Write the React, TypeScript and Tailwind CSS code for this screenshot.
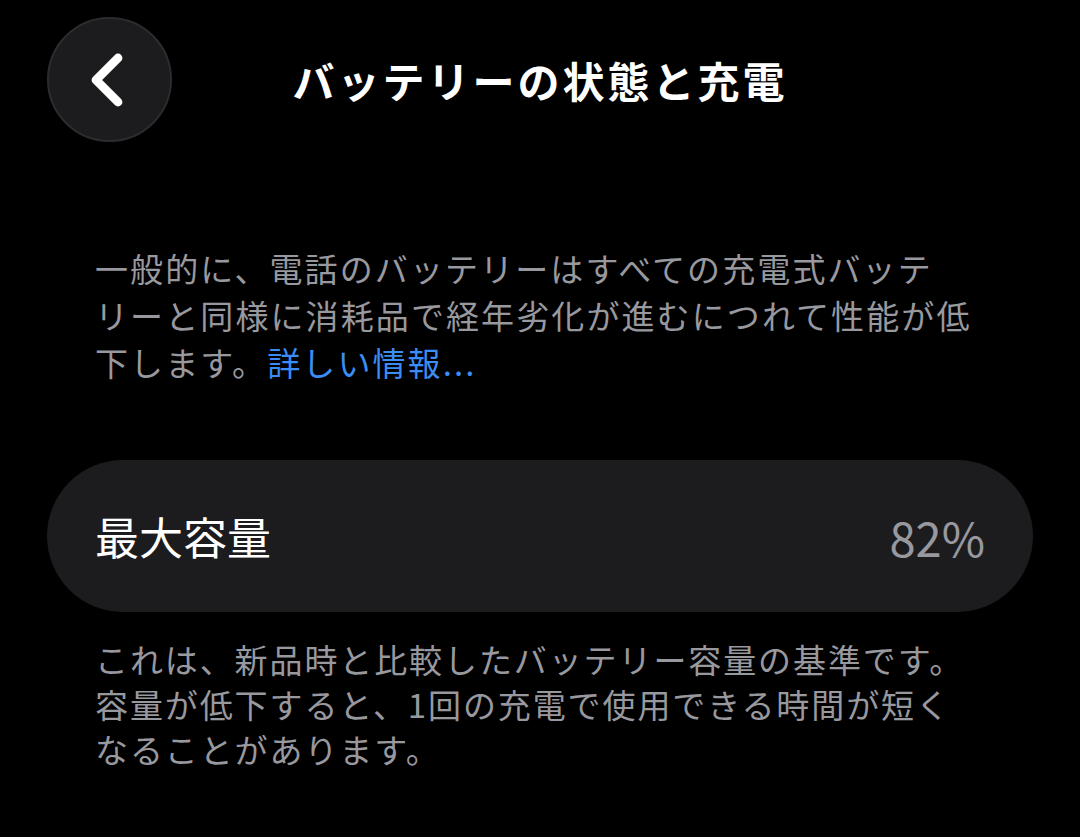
import { ChevronLeft } from 'lucide-react';

const jp = '[font-family:"Noto_Sans_CJK_JP","Noto_Sans",sans-serif]';

// 上部ナビゲーション
const Header = () => (
  <div className="grid grid-cols-[125px_1fr_125px] items-center px-[47px] pt-[17px]">
    <button className="w-[125px] h-[125px] rounded-full bg-[#1c1c1e] border-2 border-[#2c2c2e] flex items-center justify-center">
      <ChevronLeft className="w-[88px] h-[88px] text-white -ml-[6px]" strokeWidth={2.4} />
    </button>
    <h1 className="text-center text-white font-bold text-[42px] leading-none tracking-[3px]">
      バッテリーの状態と充電
    </h1>
    <div />
  </div>
);

export default function App() {
  return (
    <div className={`min-h-[837px] w-[1080px] bg-black overflow-hidden ${jp}`}>
      <Header />

      <p className="mt-[103px] px-[95px] text-[33px] leading-[47px] text-[#98989f] whitespace-nowrap tracking-[2.1px]">
        一般的に、電話のバッテリーはすべての充電式バッテ
        <br />
        リーと同様に消耗品で経年劣化が進むにつれて性能が低
        <br />
        下します。<span className="text-[#3b8cf5]">詳しい情報...</span>
      </p>

      <div className="mx-[47px] mt-[74px] h-[152px] rounded-full bg-[#1c1c1e] flex items-center justify-between pl-[48px] pr-[48px]">
        <span className="text-white text-[44px] leading-none">最大容量</span>
        <span className="text-[#98989f] text-[47px] leading-none">82%</span>
      </div>

      <p className="mt-[25px] px-[95px] text-[33px] leading-[45px] text-[#98989f] whitespace-nowrap tracking-[1.9px]">
        これは、新品時と比較したバッテリー容量の基準です。
        <br />
        容量が低下すると、1回の充電で使用できる時間が短く
        <br />
        なることがあります。
      </p>
    </div>
  );
}
